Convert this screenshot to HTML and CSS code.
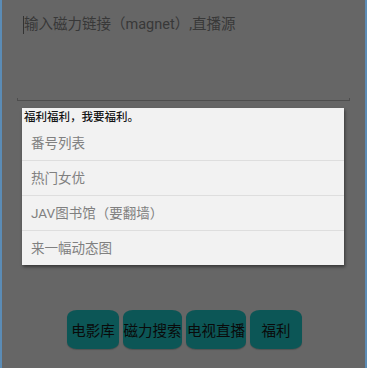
FILE: index.html
```html
<!DOCTYPE html>
<html>
<head>
<meta charset="utf-8">
<link rel="stylesheet" href="styles.css">
</head>
<body>
<div class="screen">
  <div class="input-area">
    <div class="hint"><span class="cursor"></span>输入磁力链接（magnet）,直播源</div>
  </div>
  <div class="underline"></div>
  <div class="popup">
    <div class="popup-title">福利福利，我要福利。</div>
    <div class="item">番号列表</div>
    <div class="item">热门女优</div>
    <div class="item">JAV图书馆（要翻墙）</div>
    <div class="item last">来一幅动态图</div>
  </div>
  <div class="buttons">
    <div class="btn b1">电影库</div>
    <div class="btn b2">磁力搜索</div>
    <div class="btn b3">电视直播</div>
    <div class="btn b4">福利</div>
  </div>
</div>
</body>
</html>
```
FILE: styles.css
```css
html, body {
  margin: 0;
  padding: 0;
}
body {
  width: 367px;
  height: 368px;
  overflow: hidden;
  font-family: Roboto, "Noto Sans CJK SC", sans-serif;
}
.screen {
  box-sizing: border-box;
  width: 367px;
  height: 368px;
  background: #666666;
  border-left: 2px solid #5b8cb6;
  border-right: 2px solid #5b8cb6;
  display: flex;
  flex-direction: column;
}
.input-area {
  height: 100px;
  padding-left: 21px;
  padding-top: 15px;
  box-sizing: border-box;
}
.hint {
  display: flex;
  align-items: center;
  font-size: 14.5px;
  line-height: 20px;
  color: #383838;
}
.cursor {
  display: inline-block;
  width: 1px;
  height: 18px;
  background: #333;
}
.underline {
  margin-left: 15px;
  width: 333px;
  height: 1px;
  background: #4e4e4e;
  position: relative;
}
.underline::before, .underline::after {
  content: "";
  position: absolute;
  bottom: 0;
  width: 1px;
  height: 3px;
  background: #4e4e4e;
}
.underline::before { left: 0; }
.underline::after { right: 0; }
.popup {
  margin-top: 7px;
  margin-left: 20px;
  width: 322px;
  background: #f2f2f2;
  box-shadow: 1px 2px 3px rgba(0,0,0,0.45);
}
.popup-title {
  height: 18px;
  line-height: 18px;
  padding-left: 2px;
  font-size: 11.5px;
  color: #151515;
  font-weight: 500;
}
.item {
  height: 34px;
  line-height: 34px;
  padding-left: 9px;
  font-size: 13.5px;
  color: #808080;
  border-bottom: 1px solid #dedede;
}
.item.last {
  border-bottom: none;
  height: 34px;
}
.buttons {
  margin-top: 45px;
  display: flex;
  gap: 4px;
  padding-left: 65px;
}
.btn {
  height: 39px;
  background: #0c5656;
  border-radius: 10px / 7px;
  display: flex;
  align-items: center;
  justify-content: center;
  font-size: 14.5px;
  color: #0a0a0a;
  box-shadow: 0 1px 1px rgba(0,0,0,0.2);
}
.b1 { width: 52px; }
.b2 { width: 59px; }
.b3 { width: 60px; }
.b4 { width: 52px; }
```
